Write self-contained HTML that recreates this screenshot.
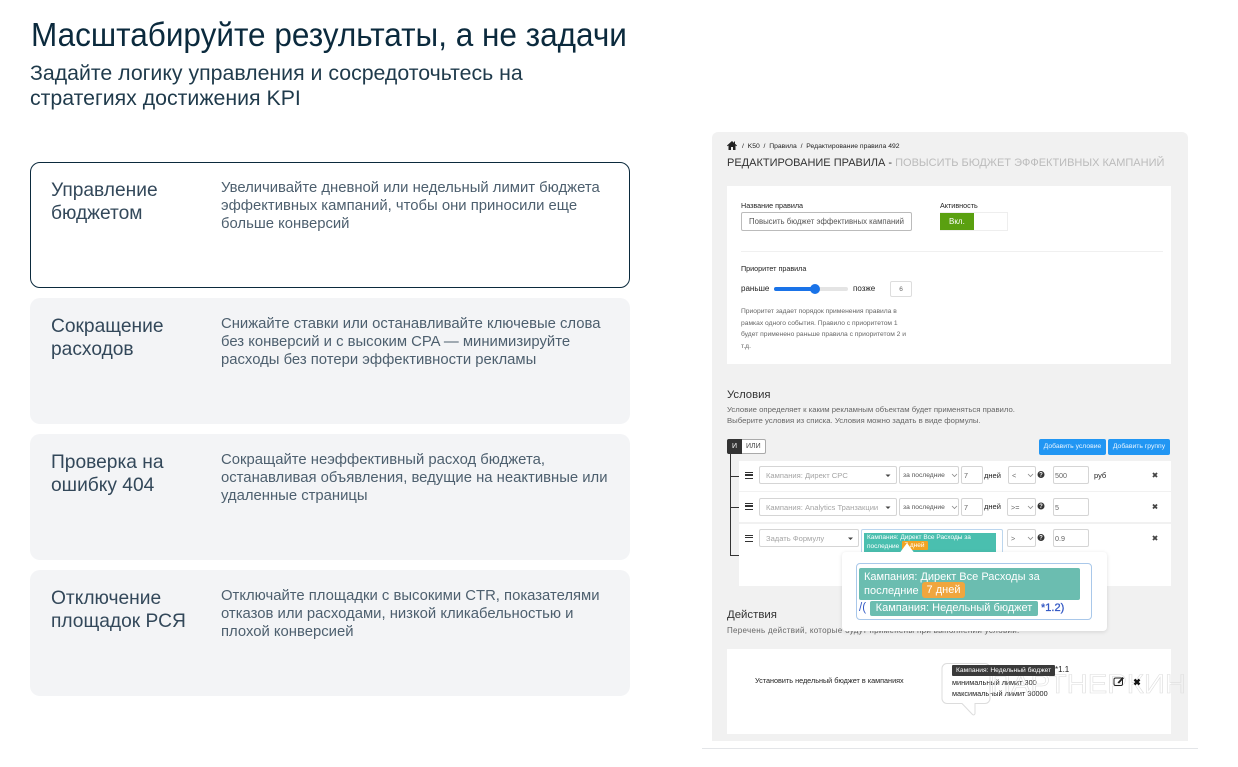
<!DOCTYPE html>
<html lang="ru"><head><meta charset="utf-8"><title>Масштабируйте результаты</title>
<style>
html,body{margin:0;padding:0;background:#fff}
body{width:1238px;height:767px;position:relative;overflow:hidden;font-family:"Liberation Sans","DejaVu Sans",sans-serif;color:#0b2a3d}
div,span.a{position:absolute;box-sizing:border-box}
.t{white-space:nowrap}
.card{left:30px;width:600px;height:126px;background:#f3f4f6;border-radius:10px}
.h{left:21px;font-size:19.2px;line-height:23px;color:#33485a;white-space:nowrap}
.d{left:191px;font-size:14.85px;line-height:18px;color:#4d5f6e;white-space:nowrap}
.s{color:#222;font-size:7.2px;white-space:nowrap}
.box{background:#fff;border:1px solid #d5d5d5;border-radius:2px}
.gr{color:#a5a5a5;font-size:7.6px;white-space:nowrap}
.row{left:739px;width:432px;background:#fff}
.m{width:8px;height:7px;border-top:1.5px solid #333;border-bottom:1.5px solid #333;left:745px}
.m div{left:0;top:1.3px;width:8px;height:1.4px;background:#333}
</style></head><body>
<div class="t" style="left:31px;top:14px;font-size:33px;line-height:42px;color:#0b2a3d;transform:scaleX(.955);transform-origin:0 0">Масштабируйте результаты, а не задачи</div>
<div class="t" style="left:30px;top:61px;font-size:21.3px;line-height:25px;color:#1f3a4b">Задайте логику управления и сосредоточьтесь на<br>стратегиях достижения KPI</div>

<div class="card" style="top:162px;background:#fff;border:1px solid #0b2a3d"><div class="h" style="left:20px;top:16px">Управление<br>бюджетом</div><div class="d" style="left:190px;top:16px">Увеличивайте дневной или недельный лимит бюджета<br>эффективных кампаний, чтобы они приносили еще<br>больше конверсий</div></div>
<div class="card" style="top:298px"><div class="h" style="top:17px">Сокращение<br>расходов</div><div class="d" style="top:17px">Снижайте ставки или останавливайте ключевые слова<br>без конверсий и с высоким CPA — минимизируйте<br>расходы без потери эффективности рекламы</div></div>
<div class="card" style="top:434px"><div class="h" style="top:17px">Проверка на<br>ошибку 404</div><div class="d" style="top:17px">Сокращайте неэффективный расход бюджета,<br>останавливая объявления, ведущие на неактивные или<br>удаленные страницы</div></div>
<div class="card" style="top:570px"><div class="h" style="top:17px">Отключение<br>площадок РСЯ</div><div class="d" style="top:17px">Отключайте площадки с высокими CTR, показателями<br>отказов или расходами, низкой кликабельностью и<br>плохой конверсией</div></div>

<!-- screenshot panel -->
<div style="left:712px;top:132px;width:476px;height:609px;background:#f1f1f1;border-radius:6px 6px 0 0"></div>
<div style="left:702px;top:748px;width:496px;height:1px;background:#e3e5e8"></div>

<svg style="position:absolute;left:727px;top:141px" width="10" height="9" viewBox="0 0 10 9"><path d="M5 0L0 4.500l.6.700L1.500 4.500V9h2.500V6h2v3h2.500V4.500l.9.700.6-.7L8 2.800V.5H7v1.400z" fill="#222"/></svg>
<div class="s t" style="left:742px;top:142px;line-height:9px;font-size:6.8px">/ &nbsp;K50 &nbsp;/ &nbsp;Правила &nbsp;/ &nbsp;Редактирование правила 492</div>
<div class="t" style="left:727px;top:156px;font-size:11px;line-height:14px;color:#333">РЕДАКТИРОВАНИЕ ПРАВИЛА - <span style="color:#bbb">ПОВЫСИТЬ БЮДЖЕТ ЭФФЕКТИВНЫХ КАМПАНИЙ</span></div>

<div style="left:727px;top:186px;width:444px;height:178px;background:#fff"></div>
<div class="s" style="left:741px;top:201px;line-height:9px">Название правила</div>
<div class="s" style="left:940px;top:201px;line-height:9px">Активность</div>
<div class="box s" style="left:741px;top:212px;width:171px;height:19px;line-height:18px;padding-left:7px;color:#555;font-size:7.8px;border-color:#bbb">Повысить бюджет эффективных кампаний</div>
<div style="left:940px;top:212px;width:68px;height:19px;background:#fff;border:1px solid #eee"></div>
<div class="t" style="left:940px;top:213px;width:34px;height:17px;background:#5aa010;color:#fff;font-size:8px;line-height:17px;padding-left:9px">Вкл.</div>
<div style="left:741px;top:251px;width:422px;height:1px;background:#f0f0f0"></div>
<div class="s" style="left:741px;top:264px;line-height:9px">Приоритет правила</div>
<div class="s" style="left:741px;top:284px;line-height:10px;font-size:8px">раньше</div>
<div style="left:774px;top:287px;width:74px;height:4px;background:#e4e4e4;border-radius:2px"></div>
<div style="left:774px;top:287px;width:42px;height:4px;background:#1a73e8;border-radius:2px"></div>
<div style="left:810px;top:284px;width:10px;height:10px;background:#1a73e8;border-radius:50%"></div>
<div class="s" style="left:853px;top:284px;line-height:10px;font-size:8px">позже</div>
<div class="box s" style="left:890px;top:281px;width:22px;height:16px;line-height:16px;text-align:center;color:#666;font-size:6.5px;border-color:#ddd">6</div>
<div class="s" style="left:741px;top:306px;line-height:11.6px;color:#666;font-size:6.7px">Приоритет задает порядок применения правила в<br>рамках одного события. Правило с приоритетом 1<br>будет применено раньше правила с приоритетом 2 и<br>т.д.</div>

<div class="t" style="left:727px;top:388px;font-size:11.3px;line-height:14px;color:#333">Условия</div>
<div class="s" style="left:727px;top:404px;line-height:11px;color:#666;font-size:7.75px">Условие определяет к каким рекламным объектам будет применяться правило.<br>Выберите условия из списка. Условия можно задать в виде формулы.</div>

<div style="left:727px;top:439px;width:39px;height:15px;background:#fff;border:1px solid #aaa;border-radius:2px"></div>
<div style="left:727px;top:439px;width:15px;height:15px;background:#333;color:#fff;font-size:7px;line-height:15px;text-align:center;border-radius:2px 0 0 2px">И</div>
<div class="s" style="left:746px;top:439px;line-height:15px;color:#444;font-size:7px">ИЛИ</div>
<div class="t" style="left:1039px;top:439px;width:67px;height:16px;background:#2196f3;color:#e8f4ff;font-size:6.8px;line-height:16px;text-align:center;border-radius:2px">Добавить условие</div>
<div class="t" style="left:1108px;top:439px;width:62px;height:16px;background:#2196f3;color:#e8f4ff;font-size:6.8px;line-height:16px;text-align:center;border-radius:2px">Добавить группу</div>

<!-- tree -->
<div style="left:729.500px;top:454px;width:1px;height:102px;background:#333"></div>
<div style="left:730px;top:476px;width:9px;height:1px;background:#333"></div>
<div style="left:730px;top:507px;width:9px;height:1px;background:#333"></div>
<div style="left:730px;top:555px;width:9px;height:1px;background:#333"></div>

<div class="row" style="top:461px;height:30px"></div>
<div class="row" style="top:492px;height:30px"></div>
<div class="row" style="top:524px;height:62px"></div>

<!-- hamburger icons -->
<div class="m" style="top:472px"><div></div></div>
<div class="m" style="top:503px"><div></div></div>
<div class="m" style="top:534.500px"><div></div></div>

<!-- row 1 -->
<div class="box gr" style="left:759px;top:466px;width:138px;height:18px;line-height:17px;padding-left:6px">Кампания: Директ CPC</div>
<div class="box s" style="left:899px;top:466px;width:60px;height:18px;line-height:18px;padding-left:3px;color:#555;font-size:6.7px">за последние</div>
<div class="box s" style="left:961px;top:466px;width:22px;height:18px;line-height:18px;padding-left:2px;color:#666">7</div>
<div class="s" style="left:984px;top:471px;line-height:9px;font-size:7.5px">дней</div>
<div class="box s" style="left:1008px;top:466px;width:28px;height:18px;line-height:18px;padding-left:3px;color:#666">&lt;</div>
<div class="box s" style="left:1053px;top:466px;width:36px;height:18px;line-height:18px;padding-left:1px;color:#666">500</div>
<div class="s" style="left:1094px;top:471px;line-height:9px;font-size:7.5px">руб</div>
<!-- row 2 -->
<div class="box gr" style="left:759px;top:498px;width:138px;height:18px;line-height:17px;padding-left:6px">Кампания: Analytics Транзакции</div>
<div class="box s" style="left:899px;top:498px;width:60px;height:18px;line-height:18px;padding-left:3px;color:#555;font-size:6.7px">за последние</div>
<div class="box s" style="left:961px;top:498px;width:22px;height:18px;line-height:18px;padding-left:2px;color:#666">7</div>
<div class="s" style="left:984px;top:502px;line-height:9px;font-size:7.5px">дней</div>
<div class="box s" style="left:1007px;top:498px;width:29px;height:18px;line-height:18px;padding-left:3px;color:#666">&gt;=</div>
<div class="box s" style="left:1053px;top:498px;width:36px;height:18px;line-height:18px;padding-left:1px;color:#666">5</div>
<!-- row 3 -->
<div class="box gr" style="left:759px;top:529px;width:100px;height:18px;line-height:17px;padding-left:6px">Задать Формулу</div>
<div style="left:861px;top:529px;width:142px;height:30px;background:#fff;border:1px solid #bcd6ee;border-radius:2px"></div>
<div style="left:864px;top:533px;width:132px;height:19px;background:#4abfaf"></div>
<div class="t" style="left:867px;top:534px;color:#fff;font-size:6.5px;line-height:8.7px">Кампания: Директ Все Расходы за<br>последние</div>
<div class="t" style="left:901.500px;top:541px;width:26px;height:9px;background:#f2a423;border-radius:1px;color:#fff;font-size:6.5px;line-height:9px;text-align:center">7 дней</div>
<div class="box s" style="left:1007px;top:529px;width:29px;height:18px;line-height:18px;padding-left:3px;color:#666">&gt;</div>
<div class="box s" style="left:1053px;top:529px;width:36px;height:18px;line-height:18px;padding-left:1px;color:#666">0.9</div>

<!-- select arrows -->
<svg style="position:absolute;left:0;top:0" width="1238" height="767">
<g fill="#444"><path d="M885.500 474.500h5l-2.500 2.500zM885.500 506.500h5l-2.500 2.500zM848 537.500h5l-2.500 2.500z"/></g>
<g fill="none" stroke="#888" stroke-width=".8"><path d="M952 474l2.500 2.500 2.500-2.500M952 506l2.500 2.500 2.500-2.500M1028 474l2.500 2.500 2.500-2.500M1028 506l2.500 2.500 2.500-2.500M1028 537l2.500 2.500 2.500-2.500"/></g>
<g fill="#333"><circle cx="1041" cy="474.500" r="3.500"/><circle cx="1041" cy="506" r="3.500"/><circle cx="1041" cy="537.500" r="3.500"/></g>
<g fill="#fff" font-family="Liberation Sans" font-size="6" font-weight="bold" text-anchor="middle"><text x="1041" y="476.700">?</text><text x="1041" y="508.200">?</text><text x="1041" y="539.700">?</text></g>
<g stroke="#444" stroke-width="1.800"><path d="M1153 473l4 4m0-4l-4 4M1153 504.500l4 4m0-4l-4 4M1153 536l4 4m0-4l-4 4"/></g>
</svg>

<div class="t" style="left:727px;top:608px;font-size:11.4px;line-height:14px;color:#333">Действия</div>
<div class="s" style="left:727px;top:626px;line-height:10px;color:#666;font-size:8px;letter-spacing:.3px">Перечень действий, которые будут применены при выполнении условий.</div>

<div style="left:727px;top:649px;width:444px;height:85px;background:#fff"></div>
<div class="s" style="left:755px;top:676px;line-height:10px;font-size:7.25px">Установить недельный бюджет в кампаниях</div>
<div class="s" style="left:952px;top:678px;line-height:10.5px;font-size:7.3px">минимальный лимит 300<br>максимальный лимит 30000</div>
<div class="s" style="left:1055px;top:665px;line-height:10px;font-size:8px">*1.1</div>

<!-- watermark -->
<svg style="position:absolute;left:940px;top:660px" width="250" height="60" viewBox="0 0 250 60"><path d="M7 3.500h38a5 5 0 0 1 5 5v30a5 5 0 0 1-5 5H35v10a1.500 1.500 0 0 1-2.500 1L22 43.500H7a5 5 0 0 1-5-5v-30a5 5 0 0 1 5-5z" fill="none" stroke="#dcdcdc" stroke-width="1"/><text x="50" y="33" font-family="Liberation Sans" font-size="27" fill="none" stroke="#dedede" stroke-width=".6" textLength="196" lengthAdjust="spacingAndGlyphs">ПАРТНЕРКИН</text></svg>
<div class="t" style="left:952px;top:665px;width:103px;height:11px;background:#3a3a3a;color:#fff;font-size:6.7px;line-height:11px;padding-left:4px;border-radius:1px">Кампания: Недельный бюджет</div>
<svg style="position:absolute;left:1113px;top:676px" width="30" height="11" viewBox="0 0 30 11"><rect x="1" y="2" width="8.500" height="7.500" rx="1.500" fill="none" stroke="#222" stroke-width="1"/><path d="M4.500 6.500L9.500 1l1.500 1.200L6 7.500z" fill="#222"/><path d="M21.500 3.500l5 5m0-5l-5 5" stroke="#111" stroke-width="2.400"/></svg>

<!-- popup -->
<div style="left:842px;top:552px;width:265px;height:79px;background:#fff;border-radius:4px;box-shadow:0 1px 4px rgba(0,0,0,.12)"></div>
<svg style="position:absolute;left:900px;top:541px" width="14" height="12"><path d="M0 11.500L7 2l7 9.500z" fill="#fff"/></svg>
<div style="left:856px;top:563px;width:236px;height:57px;background:#fff;border:1px solid #a9c8ea;border-radius:4px"></div>
<div style="left:859px;top:568px;width:221px;height:32px;background:#6bbdb0;border-radius:2px"></div>
<div class="t" style="left:864px;top:569.500px;color:#fff;font-size:11px;line-height:14px">Кампания: Директ Все Расходы за<br>последние</div>
<div class="t" style="left:922px;top:582px;width:43px;height:16px;background:#f0a63e;color:#fff;font-size:11px;line-height:16px;text-align:center;border-radius:3px">7 дней</div>
<div class="t" style="left:859px;top:601px;color:#3358c4;font-size:11.500px;line-height:14px">/(</div>
<div class="t" style="left:870px;top:601px;width:168px;height:15px;background:#6bbdb0;color:#fff;font-size:11px;line-height:15px;text-align:center;border-radius:2px">Кампания: Недельный бюджет</div>
<div class="t" style="left:1041px;top:601px;color:#3358c4;font-size:11px;line-height:14px;-webkit-text-stroke:.3px #3358c4">*1.2)</div>
</body></html>
